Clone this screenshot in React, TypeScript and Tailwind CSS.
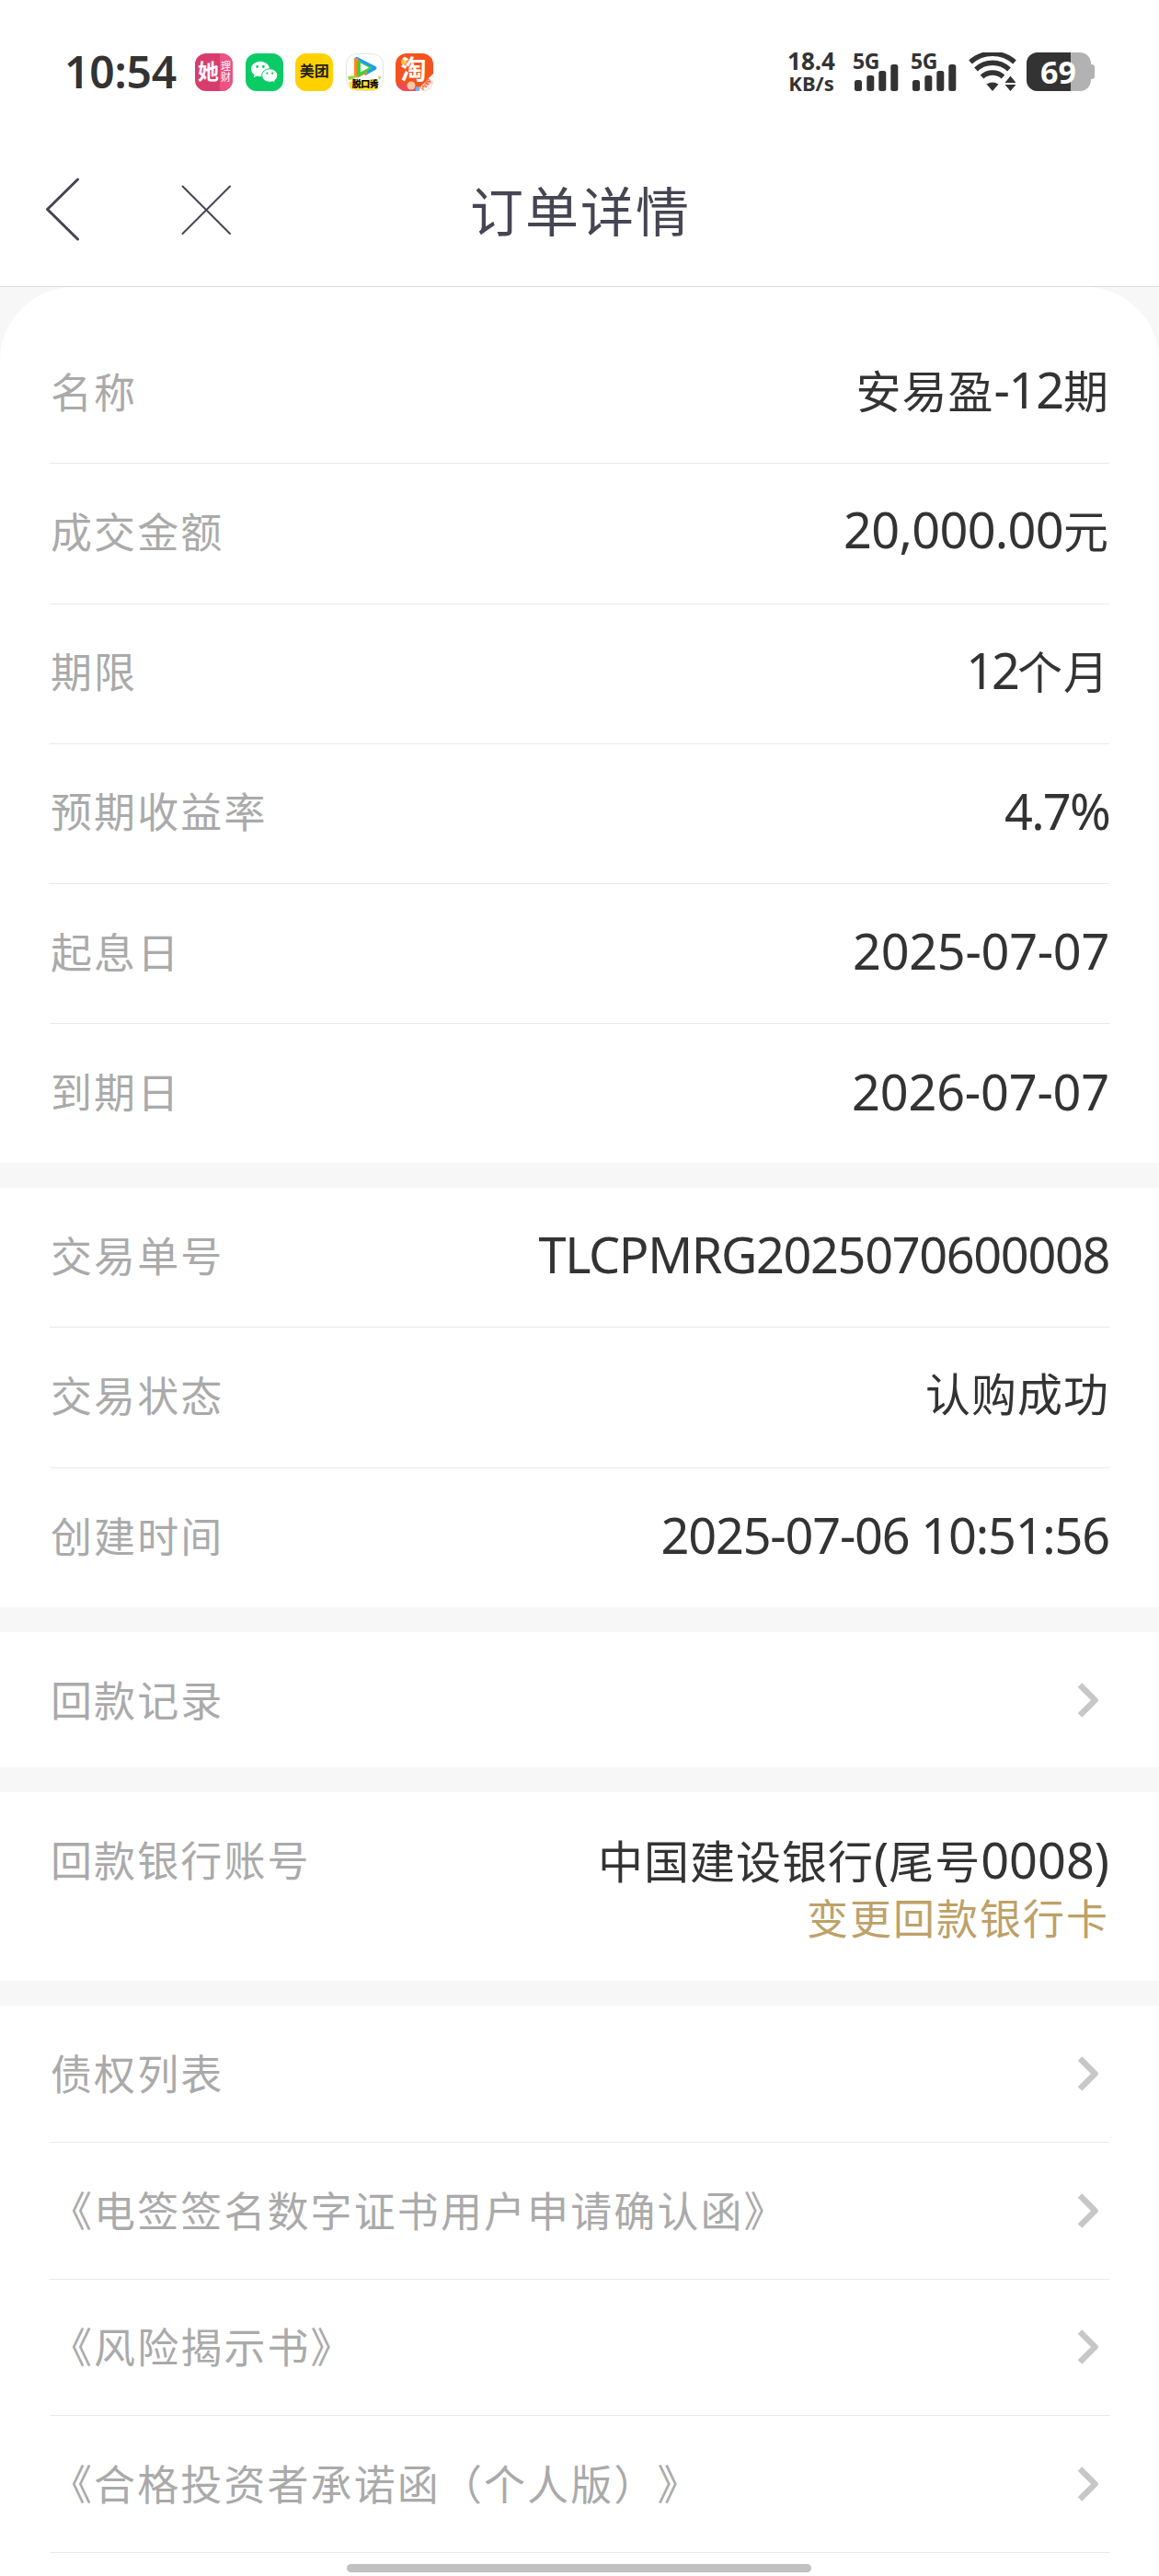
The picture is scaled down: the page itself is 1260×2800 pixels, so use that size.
import type { ReactNode } from "react";

const baseRows = [
  { label: "名称", value: "安易盈-12期", tracking: "tracking-[-1.2px]" },
  { label: "成交金额", value: "20,000.00元", tracking: "tracking-[-0.7px]" },
  { label: "期限", value: "12个月", tracking: "tracking-[-3px]" },
  { label: "预期收益率", value: "4.7%", tracking: "tracking-[-1.8px]" },
  { label: "起息日", value: "2025-07-07", tracking: "tracking-[-0.3px]" },
  { label: "到期日", value: "2026-07-07", tracking: "tracking-[-0.2px]" },
];

const tradeRows = [
  { label: "交易单号", value: "TLCPMRG2025070600008", tracking: "tracking-[-1.35px]" },
  { label: "交易状态", value: "认购成功", tracking: "tracking-normal" },
  { label: "创建时间", value: "2025-07-06 10:51:56", tracking: "tracking-[-1.2px]" },
];

const linkRows = [
  "债权列表",
  "《电签签名数字证书用户申请确认函》",
  "《风险揭示书》",
  "《合格投资者承诺函（个人版）》",
];

// Latin glyphs are drawn a little larger than the Chinese ones
function Value({ text, tracking = "tracking-normal" }: { text: string; tracking?: string }) {
  const parts = text.split(/([\u4e00-\u9fff]+)/).filter(Boolean);
  return (
    <span className="flex items-baseline whitespace-pre pb-[3px] leading-[60px] text-[#333333]">
      {parts.map((part, i) =>
        /[\u4e00-\u9fff]/.test(part) ? (
          <span key={i} className="text-[49px] tracking-[1px]">
            {part}
          </span>
        ) : (
          <span key={i} className={`text-[54px] ${tracking}`}>
            {part}
          </span>
        )
      )}
    </span>
  );
}

function Label({ children }: { children: ReactNode }) {
  return (
    <span className="whitespace-nowrap pl-px pt-[2px] text-[45px] leading-[60px] tracking-[2.1px] text-[#aaaaaa] [text-spacing-trim:space-all]">
      {children}
    </span>
  );
}

function Chevron() {
  return (
    <svg width="26" height="42" viewBox="0 0 26 42" fill="none" className="mr-[10px]">
      <path d="M4 4.5 L20.5 21 L4 37.5" stroke="#c7c7c7" strokeWidth="6.5" strokeLinejoin="round" />
    </svg>
  );
}

function InfoRow({ label, value, tracking }: { label: string; value: string; tracking: string }) {
  return (
    <div className="flex h-[152.25px] shrink-0 items-center justify-between border-b border-[#e9e9e9] pb-1 last:border-b-0">
      <Label>{label}</Label>
      <Value text={value} tracking={tracking} />
    </div>
  );
}

function Signal() {
  return (
    <div className="relative h-[42px] w-[50px]">
      <span className="absolute -top-1 left-0 text-[23px] font-bold leading-[26px] tracking-[-0.5px]">5G</span>
      <svg width="50" height="42" viewBox="0 0 50 42" fill="#333333">
        <rect x="2" y="30" width="8" height="12" rx="2.5" />
        <rect x="15.3" y="25" width="8" height="17" rx="2.5" />
        <rect x="28.3" y="20" width="8" height="22" rx="2.5" />
        <rect x="41.3" y="13" width="8" height="29" rx="2.5" />
      </svg>
    </div>
  );
}

function AppIcons() {
  return (
    <div className="ml-5 flex gap-[13.6px]">
      <div className="relative flex h-[41px] w-[41px] overflow-hidden rounded-xl bg-[#d83c6c] text-white">
        <div className="absolute inset-y-0 right-0 w-[14px] bg-[#ec5383]" />
        <span className="relative ml-[3px] text-[23px] font-bold leading-[39px]">她</span>
        <span className="relative ml-[2px] mt-[8px] flex flex-col text-[11px] leading-[12px]">
          <span>理</span>
          <span>财</span>
        </span>
      </div>
      <div className="h-[41px] w-[41px] rounded-xl bg-[#0acb66]">
        <svg width="41" height="41" viewBox="0 0 41 41">
          <path d="M16 8.8c-5.6 0-10 3.7-10 8.3 0 2.6 1.4 4.8 3.6 6.3l-.9 3 3.5-1.8c1.2.4 2.5.6 3.8.6 5.6 0 10-3.6 10-8.1s-4.4-8.3-10-8.3z" fill="#fff" />
          <path d="M26.3 16.8c-4.8 0-8.6 3.2-8.6 7.2s3.8 7.2 8.6 7.2c1.1 0 2.2-.2 3.2-.5l2.9 1.5-.8-2.5c2-1.3 3.2-3.4 3.2-5.7 0-4-3.8-7.2-8.5-7.2z" fill="#fff" stroke="#0acb66" strokeWidth="1" />
          <circle cx="12.7" cy="14.5" r="1.4" fill="#0acb66" />
          <circle cx="19.3" cy="14.5" r="1.4" fill="#0acb66" />
          <circle cx="23.5" cy="21.7" r="1.1" fill="#0acb66" />
          <circle cx="29.2" cy="21.7" r="1.1" fill="#0acb66" />
        </svg>
      </div>
      <div className="flex h-[41px] w-[41px] items-center justify-center rounded-xl bg-[#ffd100]">
        <span className="pb-[2px] text-[16px] font-bold leading-none text-[#222222]">美团</span>
      </div>
      <div className="relative h-[41px] w-[41px] overflow-hidden rounded-xl border border-[#e3e3e3] bg-white">
        <svg width="39" height="39" viewBox="0 0 39 39">
          <path d="M8 6c0-3 3-3.5 5-2.3l18 9.3c2 1 2 3 0 4L20 23z" fill="#1b9df5" />
          <path d="M8 6v16c0 3 2 4 5 3l10-5L12 5c-2-1-4-1-4 1z" fill="#ff8a1c" />
          <path d="M11 7l17 7.5-14 9.5c-2 1-3 0-3-2z" fill="#3fd13c" />
          <path d="M15 9.5l9 5-9 5z" fill="#fff" />
          <path d="M1 24l9-1-2 4-6 1z" fill="#9bd83c" />
          <path d="M34 23l4 2-3 3z" fill="#bcd86a" />
          <path d="M2 30l32-3v12H4z" fill="#ffe12b" />
        </svg>
        <span className="absolute bottom-[2px] left-[6px] whitespace-nowrap text-[10px] font-black leading-[10px] tracking-[-0.5px] text-black">
          脱口秀
        </span>
      </div>
      <div className="relative h-[41px] w-[41px] overflow-hidden rounded-xl bg-[#f4531f]">
        <svg width="41" height="41" viewBox="0 0 41 41" className="absolute inset-0">
          <circle cx="9" cy="9" r="3" fill="#ffc53a" />
          <path d="M0 34c4-2 8-1 11 0l7-1 8 8H0z" fill="#ee4a5a" />
          <circle cx="17" cy="35" r="4.5" fill="#f3c9a4" />
          <path d="M22 41L41 22v19z" fill="#fff1e6" />
          <circle cx="24" cy="38.5" r="2.5" fill="#6fb2ee" />
        </svg>
        <span className="absolute left-[5px] top-[3px] text-[28px] font-bold leading-[28px] text-white">淘</span>
        <span className="absolute bottom-[3px] right-[1px] -rotate-45 text-[7px] font-bold leading-[8px] text-[#f4531f]">闪购</span>
      </div>
    </div>
  );
}

function StatusBar() {
  return (
    <div className="flex h-[156px] shrink-0 items-center pl-[70px] pr-[70px] text-[#333333]">
      <span className="text-[48px] font-semibold leading-[48px] tracking-[-0.2px]">10:54</span>
      <AppIcons />
      <div className="ml-auto flex items-center">
        <div className="flex w-[50px] flex-col items-center font-bold">
          <span className="text-[26px] leading-[24px]">18.4</span>
          <span className="text-[22px] leading-[24px]">KB/s</span>
        </div>
        <div className="ml-5 flex gap-[13px]">
          <Signal />
          <Signal />
        </div>
        <svg width="52" height="42" viewBox="0 0 52 42" className="ml-[13px]" fill="none" stroke="#333333" strokeWidth="5.5">
          <path d="M2 10.5A36 36 0 0 1 50 10.5" />
          <path d="M8 18.5A26 26 0 0 1 44 18.5" />
          <path d="M14.5 26.5A17 17 0 0 1 37.5 26.5" />
          <path d="M19.5 34.5Q26 30.5 32.5 34.5L26 42z" fill="#333333" stroke="none" />
          <path d="M39.5 33L45.5 25.5L51.5 33zM39.5 35L45.5 42L51.5 35z" fill="#333333" stroke="none" />
        </svg>
        <div className="relative ml-[11px] h-[42px] w-[74px]">
          <div className="absolute right-0 top-[13px] h-4 w-2 rounded-[3px] bg-[#b2b2b2]" />
          <div className="relative h-[42px] w-[70px] overflow-hidden rounded-[12px] bg-[#b2b2b2]">
            <div className="h-full w-[48px] bg-[#333333]" />
          </div>
          <span className="absolute left-[15px] top-0 text-[34px] font-bold leading-[42px] text-white">69</span>
        </div>
      </div>
    </div>
  );
}

function NavBar() {
  return (
    <header className="relative flex h-[156px] shrink-0 justify-center border-b border-[#dedede]">
      <svg width="260" height="90" viewBox="0 0 260 90" fill="none" stroke="#454553" strokeLinecap="round" strokeLinejoin="round" className="absolute left-0 top-[27px]">
        <path d="M84.5 12L51.5 44.5L84.5 77" strokeWidth="3" />
        <path d="M198.5 19.5L250 71M250 19.5L198.5 71" strokeWidth="2" />
      </svg>
      <h1 className="h-[148px] pl-[2px] text-[58px] leading-[148px] tracking-[2px] text-[#454553]">订单详情</h1>
    </header>
  );
}

export default function App() {
  return (
    <div className="relative flex h-[2800px] w-[1260px] flex-col overflow-hidden bg-white font-['Noto_Sans','Noto_Sans_CJK_SC',sans-serif]">
      <StatusBar />
      <NavBar />

      <main className="flex shrink-0 flex-col gap-[27px] bg-[#f7f7f7]">
        <section className="flex h-[952px] flex-col rounded-t-[80px] bg-white px-[54px] pt-10">
          {baseRows.map((row) => (
            <InfoRow key={row.label} {...row} />
          ))}
        </section>

        <section className="flex h-[456px] flex-col bg-white px-[54px]">
          {tradeRows.map((row) => (
            <InfoRow key={row.label} {...row} />
          ))}
        </section>

        <section className="flex h-[147px] items-center justify-between bg-white px-[54px]">
          <Label>回款记录</Label>
          <Chevron />
        </section>

        {/* Bank account */}
        <section className="flex h-[205px] items-start justify-between bg-white px-[54px] pt-[43px]">
          <Label>回款银行账号</Label>
          <div className="flex flex-col items-end">
            <Value text="中国建设银行(尾号0008)" />
            <span className="text-[45px] leading-[60px] tracking-[2px] text-[#bda168]">变更回款银行卡</span>
          </div>
        </section>

        <section className="bg-white px-[54px]">
          {linkRows.map((title) => (
            <div key={title} className="flex h-[148.75px] items-center justify-between border-b border-[#e9e9e9]">
              <Label>{title}</Label>
              <Chevron />
            </div>
          ))}
          <div className="h-6" />
        </section>
      </main>

      {/* Home indicator */}
      <div className="absolute bottom-1 left-[377px] h-[9px] w-[505px] rounded-full bg-[#c1c1c1]" />
    </div>
  );
}
